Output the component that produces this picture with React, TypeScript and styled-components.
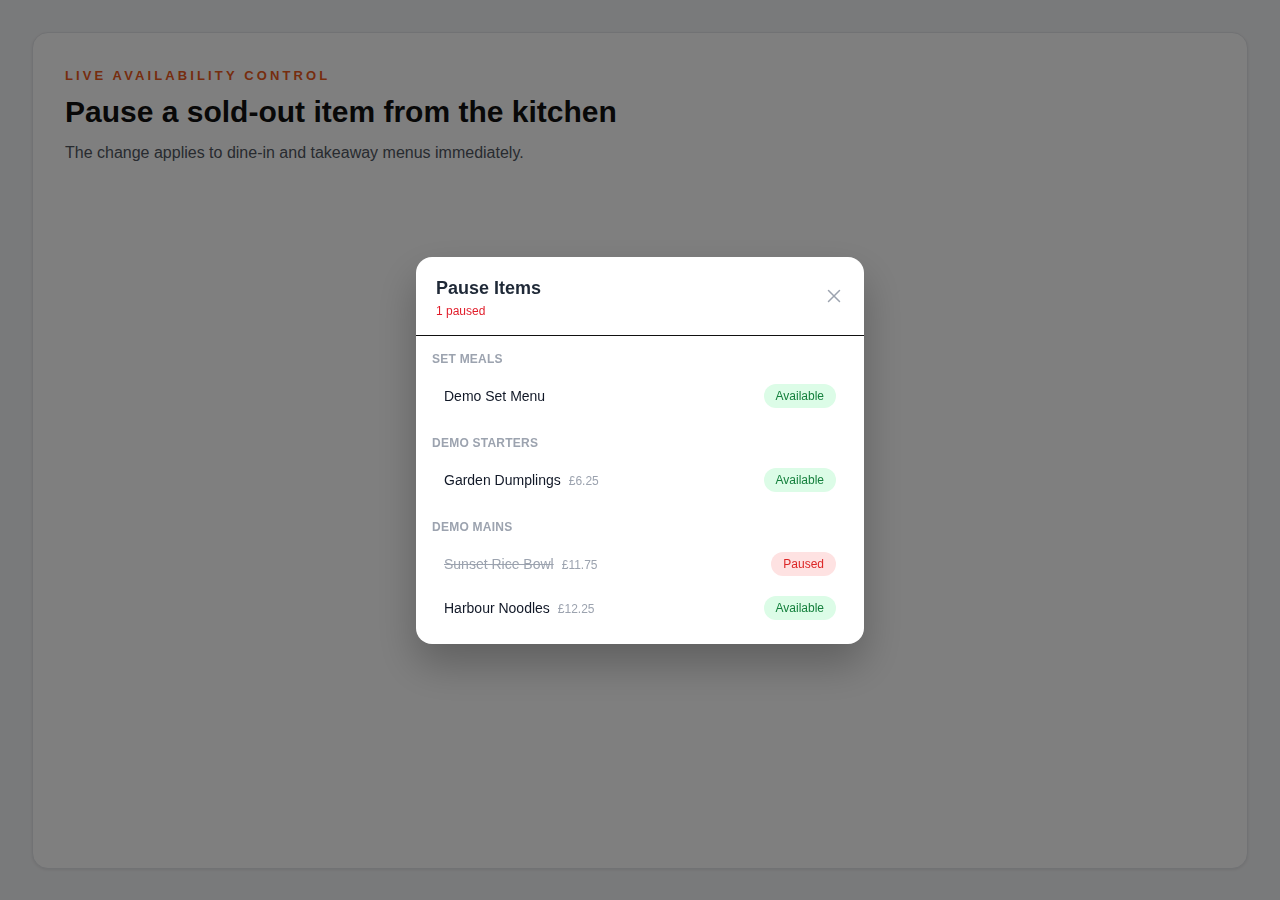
import React from "react";
import styled, { createGlobalStyle } from "styled-components";

const GlobalStyle = createGlobalStyle`
  html, body { margin: 0; padding: 0; }
  body {
    background: #f3f4f6;
    font-family: "Liberation Sans", Arial, Helvetica, sans-serif;
    color: #111827;
  }
  * { box-sizing: border-box; }
`;

const Page = styled.div`
  padding: 32px;
  min-height: 100vh;
`;

const Card = styled.section`
  background: #ffffff;
  border: 1px solid #e2e4e8;
  border-radius: 16px;
  box-shadow: 0 1px 3px rgba(0, 0, 0, 0.08);
  min-height: 837px;
  padding: 34px 32px 32px;
`;

const Eyebrow = styled.div`
  font-size: 13px;
  line-height: 18px;
  font-weight: 700;
  letter-spacing: 0.24em;
  text-transform: uppercase;
  color: #ec5a1c;
`;

const Heading = styled.h1`
  margin: 8px 0 0;
  font-size: 30px;
  line-height: 38px;
  font-weight: 700;
  color: #111111;
`;

const Lead = styled.p`
  margin: 10px 0 0;
  font-size: 16px;
  line-height: 24px;
  color: #505660;
`;

const Overlay = styled.div`
  position: fixed;
  inset: 0;
  background: rgba(0, 0, 0, 0.5);
  display: flex;
  align-items: flex-start;
  justify-content: center;
  padding-top: 257px;
`;

const Modal = styled.div`
  width: 448px;
  background: #ffffff;
  border-radius: 16px;
  box-shadow: 0 20px 40px rgba(0, 0, 0, 0.25);
  overflow: hidden;
`;

const ModalHeader = styled.header`
  display: flex;
  align-items: flex-start;
  justify-content: space-between;
  padding: 20px 20px 16px;
  border-bottom: 1px solid #111111;
`;

const Title = styled.h2`
  margin: 0;
  font-size: 18px;
  line-height: 22px;
  font-weight: 700;
  color: #1f2937;
`;

const Subtitle = styled.div`
  margin-top: 4px;
  font-size: 12px;
  line-height: 16px;
  color: #e11d2a;
`;

const CloseButton = styled.button`
  border: 0;
  background: transparent;
  padding: 0;
  margin: 11px 2px 0 0;
  width: 16px;
  height: 16px;
  display: flex;
  align-items: center;
  justify-content: center;
  color: #9ca3af;
  cursor: pointer;
`;

const ModalBody = styled.div`
  padding: 16px 16px 14px;
  display: flex;
  flex-direction: column;
  gap: 18px;
`;

const Section = styled.div`
  display: flex;
  flex-direction: column;
`;

const SectionLabel = styled.div`
  font-size: 12px;
  line-height: 14px;
  font-weight: 700;
  text-transform: uppercase;
  letter-spacing: 0.02em;
  color: #9ca3af;
  margin-bottom: 8px;
`;

const Row = styled.div`
  height: 44px;
  display: flex;
  align-items: center;
  justify-content: space-between;
  padding: 0 12px;
`;

const ItemInfo = styled.div`
  display: flex;
  align-items: baseline;
  gap: 8px;
`;

const ItemName = styled.span<{ $paused?: boolean }>`
  font-size: 14px;
  color: ${(p) => (p.$paused ? "#9ca3af" : "#111827")};
  text-decoration: ${(p) => (p.$paused ? "line-through" : "none")};
`;

const Price = styled.span`
  font-size: 12px;
  color: #9ca3af;
`;

const Badge = styled.span<{ $paused?: boolean }>`
  display: inline-flex;
  align-items: center;
  height: 24px;
  padding: 0 12px;
  border-radius: 999px;
  font-size: 12px;
  background: ${(p) => (p.$paused ? "#fee2e2" : "#dcfce7")};
  color: ${(p) => (p.$paused ? "#dc2626" : "#15803d")};
`;

type Item = { name: string; price?: string; paused?: boolean };
type Group = { label: string; items: Item[] };

const groups: Group[] = [
  { label: "Set Meals", items: [{ name: "Demo Set Menu" }] },
  { label: "Demo Starters", items: [{ name: "Garden Dumplings", price: "£6.25" }] },
  {
    label: "Demo Mains",
    items: [
      { name: "Sunset Rice Bowl", price: "£11.75", paused: true },
      { name: "Harbour Noodles", price: "£12.25" },
    ],
  },
];

export default function App() {
  return (
    <>
      <GlobalStyle />
      <Page>
        <Card>
          <Eyebrow>Live availability control</Eyebrow>
          <Heading>Pause a sold-out item from the kitchen</Heading>
          <Lead>The change applies to dine-in and takeaway menus immediately.</Lead>
        </Card>
      </Page>
      <Overlay>
        <Modal role="dialog" aria-label="Pause Items">
          <ModalHeader>
            <div>
              <Title>Pause Items</Title>
              <Subtitle>1 paused</Subtitle>
            </div>
            <CloseButton aria-label="Close">
              <svg width="14" height="14" viewBox="0 0 14 14" fill="none">
                <path d="M1.5 1.5 L12.5 12.5 M12.5 1.5 L1.5 12.5" stroke="currentColor" strokeWidth="1.5" strokeLinecap="round" />
              </svg>
            </CloseButton>
          </ModalHeader>
          <ModalBody>
            {groups.map((g) => (
              <Section key={g.label}>
                <SectionLabel>{g.label}</SectionLabel>
                {g.items.map((it) => (
                  <Row key={it.name}>
                    <ItemInfo>
                      <ItemName $paused={it.paused}>{it.name}</ItemName>
                      {it.price && <Price>{it.price}</Price>}
                    </ItemInfo>
                    <Badge $paused={it.paused}>{it.paused ? "Paused" : "Available"}</Badge>
                  </Row>
                ))}
              </Section>
            ))}
          </ModalBody>
        </Modal>
      </Overlay>
    </>
  );
}
